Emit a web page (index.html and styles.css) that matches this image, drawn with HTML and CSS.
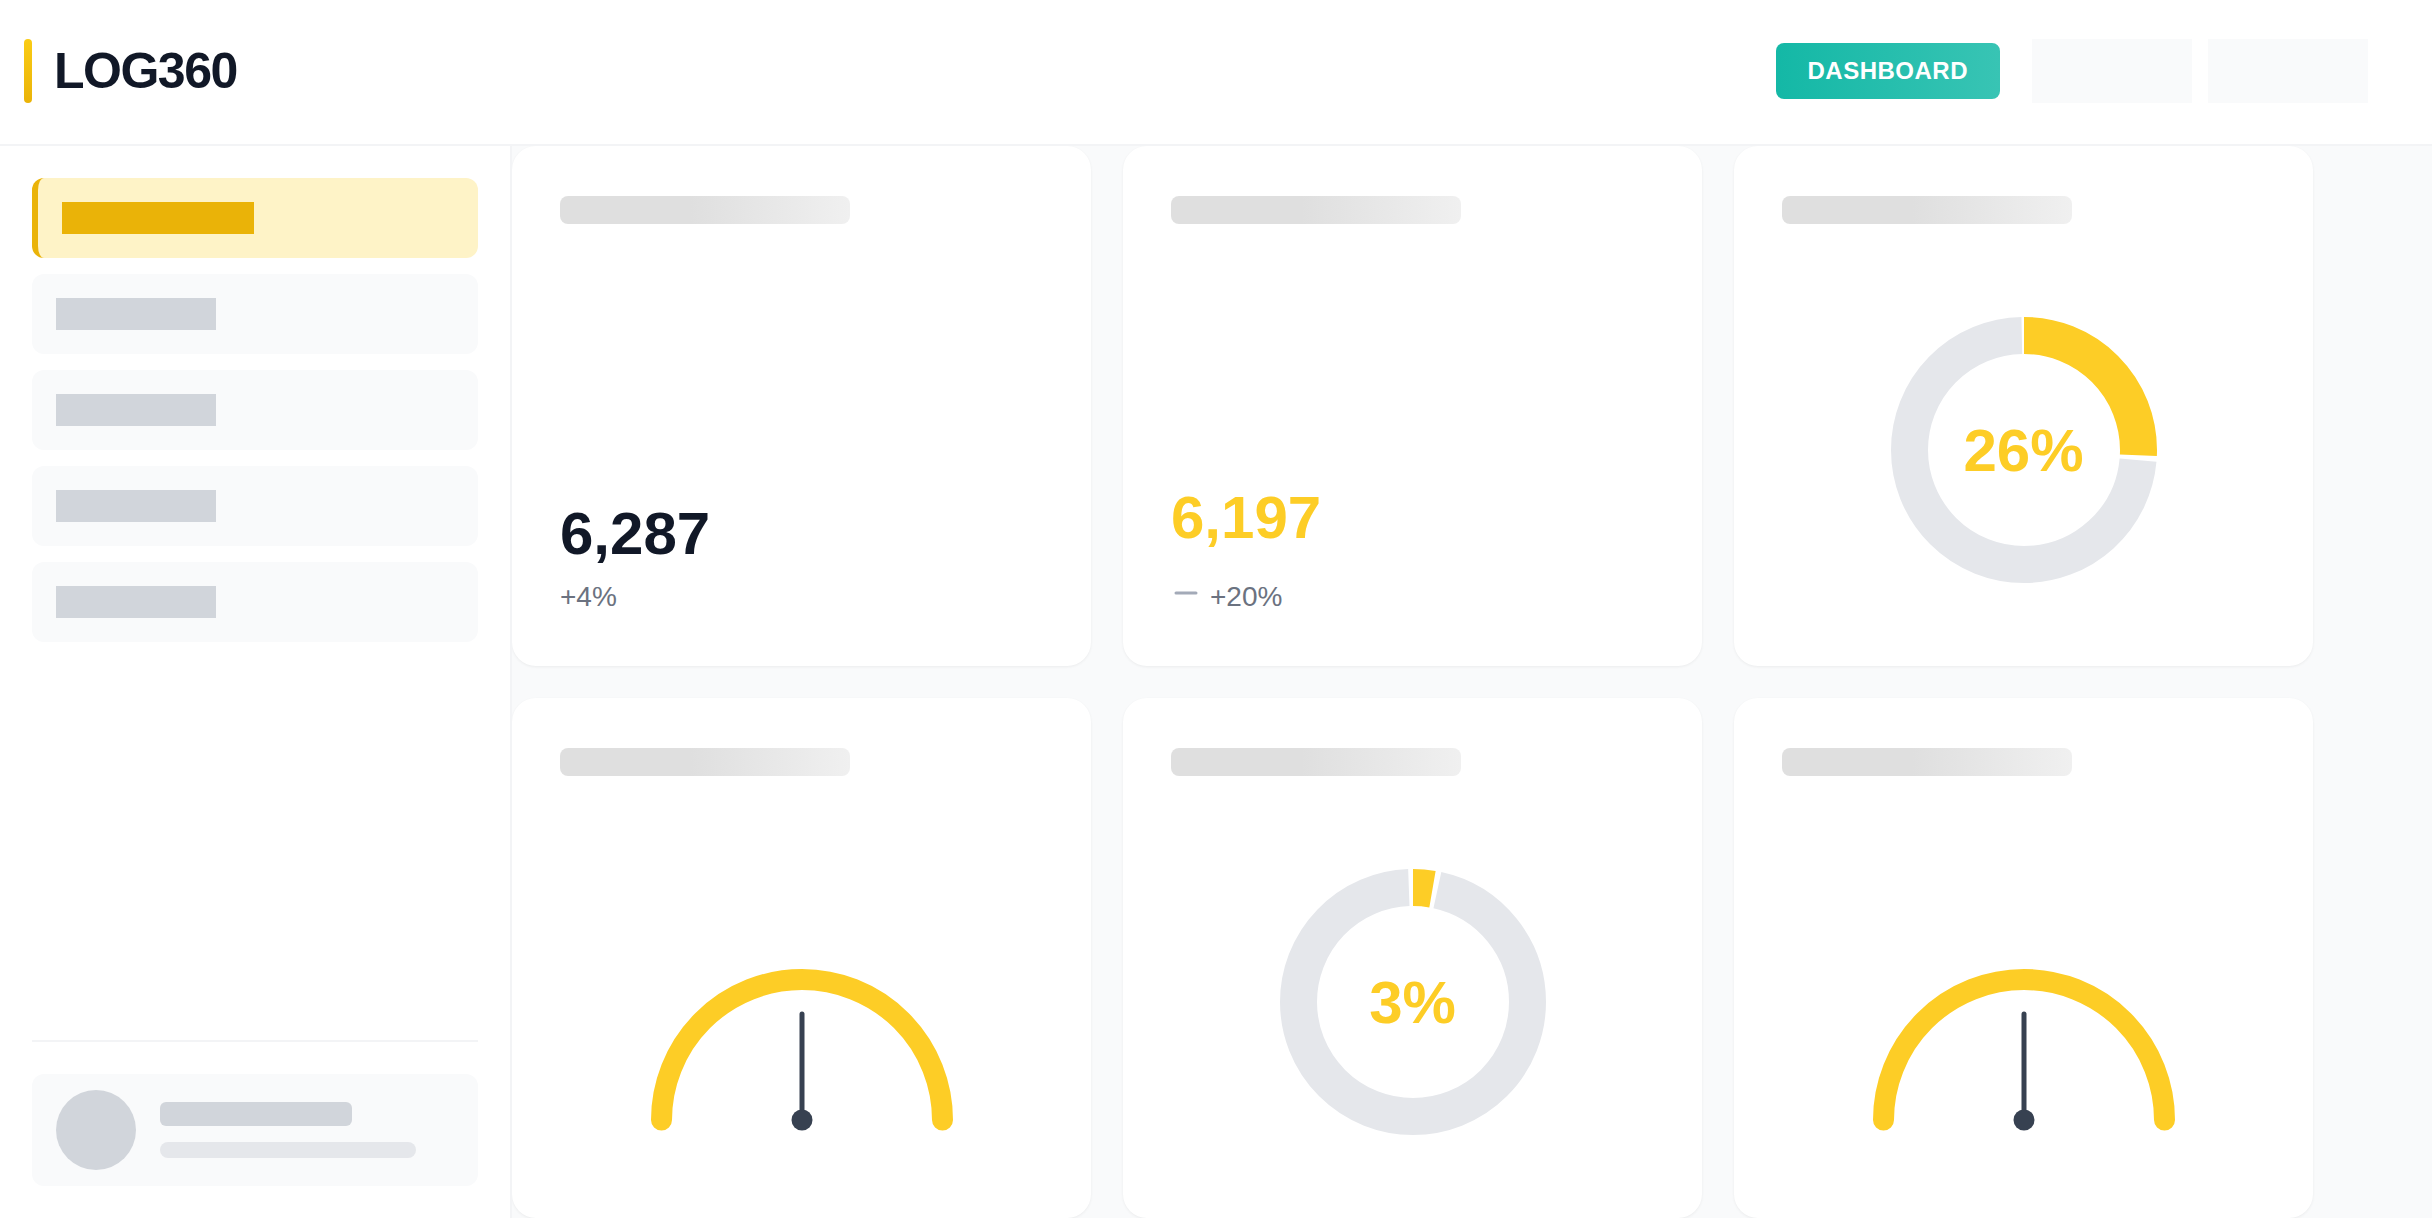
FILE: index.html
```html
<!DOCTYPE html>
<html lang="en">
<head>
    <meta charset="UTF-8">
    <meta name="viewport" content="width=device-width, initial-scale=1.0">
    <title>LOG360</title>
    <link rel="stylesheet" href="styles.css">
</head>
<body>
    <header class="header">
        <div class="brand">
            <span class="brand-bar"></span>
            <span class="brand-name">LOG360</span>
        </div>
        <div class="header-actions">
            <button class="btn-dashboard">DASHBOARD</button>
            <div class="header-slot"></div>
            <div class="header-slot"></div>
        </div>
    </header>

    <div class="layout">
        <aside class="sidebar">
            <nav class="nav">
                <div class="nav-item active"><span class="nav-label"></span></div>
                <div class="nav-item"><span class="nav-label"></span></div>
                <div class="nav-item"><span class="nav-label"></span></div>
                <div class="nav-item"><span class="nav-label"></span></div>
                <div class="nav-item"><span class="nav-label"></span></div>
            </nav>
            <div class="sidebar-footer">
                <div class="user-card">
                    <div class="avatar"></div>
                    <div class="user-lines">
                        <span class="user-name"></span>
                        <span class="user-mail"></span>
                    </div>
                </div>
            </div>
        </aside>

        <main class="main">
            <div class="card">
                <div class="card-title"></div>
                <div class="stat">
                    <div class="stat-value">6,287</div>
                    <div class="stat-sub">+4%</div>
                </div>
            </div>

            <div class="card">
                <div class="card-title"></div>
                <div class="stat">
                    <div class="stat-value yellow">6,197</div>
                    <div class="stat-sub trend">
                        <svg class="trend-icon" width="32" height="32" viewBox="0 0 32 32">
                            <line x1="5" y1="12" x2="25" y2="12" stroke="#a3aab8" stroke-width="3" stroke-linecap="round"/>
                        </svg>
                        <span>+20%</span>
                    </div>
                </div>
            </div>

            <div class="card">
                <div class="card-title"></div>
                <div class="donut">
                    <svg width="266" height="266" viewBox="0 0 266 266">
                        <g transform="rotate(-90 133 133)">
                            <circle cx="133" cy="133" r="114.5" fill="none" stroke="#e5e7eb" stroke-width="37"
                                    stroke-dasharray="526.4 193.02" stroke-dashoffset="-190.05"/>
                            <circle cx="133" cy="133" r="114.5" fill="none" stroke="#fdcd26" stroke-width="37"
                                    stroke-dasharray="185.05 534.37" stroke-dashoffset="0"/>
                        </g>
                    </svg>
                    <div class="donut-value">26%</div>
                </div>
            </div>

            <div class="card">
                <div class="card-title"></div>
                <svg class="gauge" width="320" height="180" viewBox="0 0 320 180">
                    <path d="M19.5 160 A140.5 140.5 0 0 1 300.5 160" fill="none" stroke="#fdcd26" stroke-width="21" stroke-linecap="round"/>
                    <line x1="160" y1="54" x2="160" y2="160" stroke="#374151" stroke-width="5" stroke-linecap="round"/>
                    <circle cx="160" cy="160" r="10.5" fill="#374151"/>
                </svg>
            </div>

            <div class="card">
                <div class="card-title"></div>
                <div class="donut">
                    <svg width="266" height="266" viewBox="0 0 266 266">
                        <g transform="rotate(-90 133 133)">
                            <circle cx="133" cy="133" r="114.5" fill="none" stroke="#e5e7eb" stroke-width="37"
                                    stroke-dasharray="689.84 29.58" stroke-dashoffset="-24.58"/>
                            <circle cx="133" cy="133" r="114.5" fill="none" stroke="#fdcd26" stroke-width="37"
                                    stroke-dasharray="19.58 699.84" stroke-dashoffset="0"/>
                        </g>
                    </svg>
                    <div class="donut-value">3%</div>
                </div>
            </div>

            <div class="card">
                <div class="card-title"></div>
                <svg class="gauge" width="320" height="180" viewBox="0 0 320 180">
                    <path d="M19.5 160 A140.5 140.5 0 0 1 300.5 160" fill="none" stroke="#fdcd26" stroke-width="21" stroke-linecap="round"/>
                    <line x1="160" y1="54" x2="160" y2="160" stroke="#374151" stroke-width="5" stroke-linecap="round"/>
                    <circle cx="160" cy="160" r="10.5" fill="#374151"/>
                </svg>
            </div>
        </main>
    </div>
</body>
</html>
```

FILE: styles.css
```css
* {
    box-sizing: border-box;
}
body {
    margin: 0;
    height: 100vh;
    overflow: hidden;
    background-color: #ffffff;
    font-family: "Liberation Sans", Arial, sans-serif;
    color: #111827;
}

/* Topo */
.header {
    height: 146px;
    display: flex;
    align-items: center;
    justify-content: space-between;
    padding: 0 64px 2px 24px;
    border-bottom: 2px solid #f3f4f6;
    background-color: #ffffff;
}
.brand {
    display: flex;
    align-items: center;
    gap: 22px;
}
.brand-bar {
    width: 8px;
    height: 64px;
    border-radius: 4px;
    background: linear-gradient(180deg, #facc15, #eab308);
}
.brand-name {
    font-size: 50px;
    font-weight: bold;
    letter-spacing: -1.5px;
    color: #111827;
}
.header-actions {
    display: flex;
    align-items: center;
    gap: 16px;
}
.btn-dashboard {
    height: 56px;
    padding: 0 32px;
    margin-right: 16px;
    border: none;
    border-radius: 8px;
    background: linear-gradient(90deg, #14b8a6, #38c4b4);
    color: #ffffff;
    font-family: inherit;
    font-size: 24px;
    font-weight: bold;
    letter-spacing: 0.5px;
    cursor: pointer;
}
.header-slot {
    width: 160px;
    height: 64px;
    background-color: #f9fafb;
}

/* Estrutura */
.layout {
    display: flex;
    height: calc(100vh - 146px);
}
.sidebar {
    width: 512px;
    flex-shrink: 0;
    display: flex;
    flex-direction: column;
    padding: 32px;
    border-right: 2px solid #f3f4f6;
    background-color: #ffffff;
}
.nav {
    display: flex;
    flex-direction: column;
    gap: 16px;
}
.nav-item {
    padding: 24px;
    border-radius: 12px;
    background-color: #f9fafb;
}
.nav-label {
    display: block;
    width: 160px;
    height: 32px;
    background-color: #d1d5db;
}
.nav-item.active {
    background-color: #fef3c7;
    border-left: 6px solid #eab308;
}
.nav-item.active .nav-label {
    width: 192px;
    background-color: #eab308;
}
.sidebar-footer {
    margin-top: auto;
    padding-top: 32px;
    border-top: 2px solid #f3f4f6;
}
.user-card {
    display: flex;
    align-items: center;
    gap: 24px;
    padding: 16px 24px;
    border-radius: 12px;
    background-color: #f9fafb;
}
.avatar {
    width: 80px;
    height: 80px;
    border-radius: 50%;
    background-color: #d1d5db;
}
.user-lines {
    display: flex;
    flex-direction: column;
    gap: 16px;
}
.user-name {
    width: 192px;
    height: 24px;
    border-radius: 6px;
    background-color: #d1d5db;
}
.user-mail {
    width: 256px;
    height: 16px;
    border-radius: 8px;
    background-color: #e5e7eb;
}

/* Cartões */
.main {
    flex: 1;
    display: grid;
    grid-template-columns: repeat(3, 579px);
    grid-auto-rows: 520px;
    gap: 32px;
    align-content: start;
    overflow: hidden;
    background-color: #f9fafb;
}
.card {
    display: flex;
    flex-direction: column;
    padding: 50px 48px 48px;
    border-radius: 24px;
    background-color: #ffffff;
    box-shadow: 0 1px 3px rgba(0, 0, 0, 0.06);
}
.card-title {
    width: 290px;
    height: 28px;
    flex-shrink: 0;
    border-radius: 8px;
    background: linear-gradient(90deg, #dfdfdf 0%, #dfdfdf 45%, #f0f0f0 100%);
}
.stat {
    margin-top: auto;
}
.stat-value {
    font-size: 60px;
    font-weight: bold;
    line-height: 1;
    margin-bottom: 12px;
    color: #111827;
}
.stat-value.yellow {
    color: #fdcd26;
    margin-bottom: 28px;
}
.stat-sub {
    font-size: 28px;
    line-height: 42px;
    color: #6b7280;
}
.trend {
    display: flex;
    align-items: center;
    gap: 7px;
}
.donut {
    display: grid;
    place-items: center;
    align-self: center;
    margin-top: 93px;
}
.donut svg,
.donut-value {
    grid-area: 1 / 1;
}
.donut-value {
    font-size: 60px;
    font-weight: bold;
    color: #fdcd26;
}
.gauge {
    align-self: center;
    margin-top: 184px;
}
```
